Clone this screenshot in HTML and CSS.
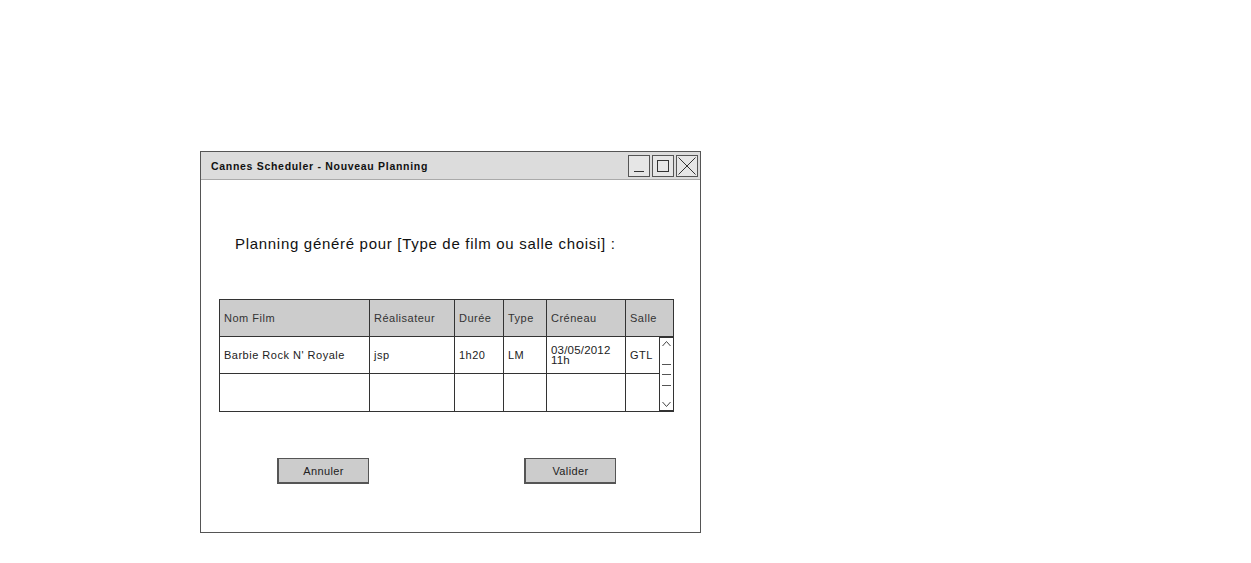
FILE: index.html
```html
<!DOCTYPE html>
<html lang="fr">
<head>
<meta charset="utf-8">
<title>Cannes Scheduler - Nouveau Planning</title>
<link rel="stylesheet" href="styles.css">
</head>
<body>
<div class="window">
  <div class="titlebar">
    <span class="title">Cannes Scheduler - Nouveau Planning</span>
    <div class="controls">
      <span class="ctl"><svg width="20" height="20" viewBox="0 0 20 20"><line x1="5" y1="15.5" x2="15" y2="15.5" stroke="#333" stroke-width="1"/></svg></span>
      <span class="ctl"><svg width="20" height="20" viewBox="0 0 20 20"><rect x="4.5" y="4.5" width="11" height="11" fill="none" stroke="#333" stroke-width="1"/></svg></span>
      <span class="ctl"><svg width="20" height="20" viewBox="0 0 20 20"><path d="M1.5 1.5 L18.5 18.5 M18.5 1.5 L1.5 18.5" stroke="#333" stroke-width="1"/></svg></span>
    </div>
  </div>
  <div class="body">
    <p class="heading">Planning généré pour [Type de film ou salle choisi] :</p>
    <div class="table">
      <div class="cell head">Nom Film</div>
      <div class="cell head">Réalisateur</div>
      <div class="cell head">Durée</div>
      <div class="cell head">Type</div>
      <div class="cell head">Créneau</div>
      <div class="cell head">Salle</div>

      <div class="cell">Barbie Rock N' Royale</div>
      <div class="cell">jsp</div>
      <div class="cell">1h20</div>
      <div class="cell">LM</div>
      <div class="cell two">03/05/2012<br>11h</div>
      <div class="cell">GTL</div>

      <div class="cell last"></div>
      <div class="cell last"></div>
      <div class="cell last"></div>
      <div class="cell last"></div>
      <div class="cell last"></div>
      <div class="cell last"></div>

      <div class="scrollbar">
        <svg width="13" height="72" viewBox="0 0 13 72">
          <path d="M2.5 8 L6.5 3.5 L10.5 8" fill="none" stroke="#444" stroke-width="1"/>
          <line x1="2" y1="26.5" x2="11" y2="26.5" stroke="#555"/>
          <line x1="2" y1="36.5" x2="11" y2="36.5" stroke="#555"/>
          <line x1="2" y1="47.5" x2="11" y2="47.5" stroke="#555"/>
          <path d="M2.5 64 L6.5 68.5 L10.5 64" fill="none" stroke="#444" stroke-width="1"/>
        </svg>
      </div>
    </div>
    <div class="actions">
      <button class="btn">Annuler</button>
      <button class="btn">Valider</button>
    </div>
  </div>
</div>
</body>
</html>
```

FILE: styles.css
```css
html, body {
  margin: 0;
  padding: 0;
  background: #fff;
}
body {
  font-family: "Comic Sans MS", "Liberation Sans", sans-serif;
  color: #222;
  padding: 151px 0 0 200px;
}
.window {
  width: 499px;
  height: 380px;
  border: 1px solid #555;
  background: #fff;
  display: flex;
  flex-direction: column;
}
.titlebar {
  height: 27px;
  background: #dcdcdc;
  border-bottom: 1px solid #aaa;
  display: flex;
  align-items: center;
  justify-content: space-between;
  padding: 0 2px 0 10px;
}
.title {
  font-size: 10.5px;
  font-weight: bold;
  color: #111;
  letter-spacing: 0.7px;
}
.controls {
  display: flex;
  gap: 2px;
}
.ctl {
  width: 20px;
  height: 20px;
  border: 1px solid #555;
  background: #e6e6e6;
  display: block;
}
.ctl svg { display: block; }
.body {
  padding: 54px 0 0 18px;
}
.heading {
  margin: 0 0 0 16px;
  font-size: 15px;
  line-height: 20px;
  color: #111;
  letter-spacing: 0.7px;
}
.table {
  position: relative;
  margin-top: 45px;
  display: grid;
  grid-template-columns: 150px 85px 49px 43px 79px 48px;
  grid-template-rows: 37px 37px 38px;
  width: 454px;
  border-left: 1px solid #333;
  border-top: 1px solid #333;
}
.cell {
  border-right: 1px solid #333;
  border-bottom: 1px solid #333;
  font-size: 11px;
  letter-spacing: 0.5px;
  color: #222;
  display: flex;
  align-items: center;
  padding-left: 4px;
  white-space: nowrap;
  overflow: hidden;
}
.cell.head {
  background: #cccccc;
  color: #333;
}
.cell.two {
  line-height: 10px;
  font-size: 11.5px;
  letter-spacing: 0.2px;
}
.scrollbar {
  position: absolute;
  right: 0;
  top: 37px;
  width: 13px;
  height: 72px;
  border: 1px solid #333;
  background: #fff;
}
.scrollbar svg { display: block; }
.actions {
  margin-top: 46px;
  display: flex;
  padding-left: 58px;
  gap: 155px;
}
.btn {
  width: 92px;
  height: 26px;
  font-family: inherit;
  font-size: 11px;
  letter-spacing: 0.4px;
  color: #222;
  background: #cccccc;
  border: 1px solid #555;
  border-left-width: 2px;
  border-bottom-width: 2px;
  padding: 0;
  border-radius: 0;
}
```
